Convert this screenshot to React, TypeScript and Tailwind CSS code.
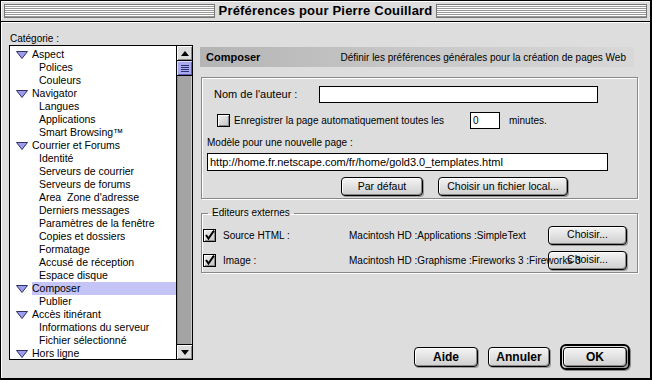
import React from "react";

type Row = { label: string; parent?: boolean; selected?: boolean };

const rows: Row[] = [
  { label: "Aspect", parent: true },
  { label: "Polices" },
  { label: "Couleurs" },
  { label: "Navigator", parent: true },
  { label: "Langues" },
  { label: "Applications" },
  { label: "Smart Browsing™" },
  { label: "Courrier et Forums", parent: true },
  { label: "Identité" },
  { label: "Serveurs de courrier" },
  { label: "Serveurs de forums" },
  { label: "Area  Zone d'adresse" },
  { label: "Derniers messages" },
  { label: "Paramètres de la fenêtre" },
  { label: "Copies et dossiers" },
  { label: "Formatage" },
  { label: "Accusé de réception" },
  { label: "Espace disque" },
  { label: "Composer", parent: true, selected: true },
  { label: "Publier" },
  { label: "Accès itinérant", parent: true },
  { label: "Informations du serveur" },
  { label: "Fichier sélectionné" },
  { label: "Hors ligne", parent: true },
];

function Triangle() {
  return (
    <svg width="12" height="8" viewBox="0 0 12 8" className="shrink-0">
      <path d="M0.5 0.5 H11.5 L6 7.5 Z" fill="#9c9cf0" stroke="#303060" strokeWidth="1" />
    </svg>
  );
}

function MacButton({ label, className }: { label: string; className: string }) {
  return (
    <div
      className={`flex items-center justify-center rounded-[4px] border border-black bg-gradient-to-b from-[#f4f4f4] to-[#cfcfcf] text-black shadow-[inset_-1px_-1px_0_#888888,inset_1px_1px_0_#ffffff,1px_1px_0_#999999] ${className}`}
    >
      {label}
    </div>
  );
}

function CheckBox({ checked }: { checked?: boolean }) {
  return (
    <div className="relative h-[13px] w-[13px] shrink-0 border border-black bg-gradient-to-br from-[#f0f0f0] to-[#c4c4c4] shadow-[inset_1px_1px_0_#ffffff,inset_-1px_-1px_0_#888888]">
      {checked && (
        <svg width="13" height="13" viewBox="0 0 13 13" className="absolute left-[-1px] top-[-1px]">
          <path d="M3 6 L5.5 9.5 L11 1.5" fill="none" stroke="#000000" strokeWidth="2" />
        </svg>
      )}
    </div>
  );
}

function Stripes() {
  return (
    <div className="h-[14px] flex-1 border border-[#777777] bg-[repeating-linear-gradient(to_bottom,#ffffff_0px,#ffffff_1px,#999999_1px,#999999_2px)]" />
  );
}

export default function App() {
  return (
    <div className="flex h-[380px] w-[652px] flex-col overflow-hidden border-l border-t border-r-2 border-b-2 border-black bg-[#dddddd] font-['Liberation_Sans',Arial,sans-serif] text-[10px] text-black">
      {/* title bar */}
      <div className="flex h-[21px] shrink-0 items-center gap-[4px] border-b border-black px-[3px] shadow-[inset_1px_1px_0_#ffffff]">
        <Stripes />
        <div className="text-[13px] font-bold tracking-[0.2px]">Préférences pour Pierre Couillard</div>
        <Stripes />
      </div>

      <div className="flex flex-1 shadow-[inset_1px_1px_0_#ffffff]">
        {/* left column */}
        <div className="w-[192px] shrink-0 pl-[8px] pt-[11px]">
          <div className="h-[12px] pl-[1px] leading-[12px]">Catégorie :</div>
          <div className="flex h-[315px] w-[184px] border border-black">
            <div className="flex-1 overflow-hidden bg-white pt-[2px] text-[10.5px]">
              {rows.map((r) => (
                <div key={r.label} className="flex h-[13px] items-center leading-[13px]">
                  {r.parent ? (
                    <>
                      <div className="flex w-[22px] justify-end pr-[4px]">
                        <Triangle />
                      </div>
                      <div className={`h-[13px] flex-1 whitespace-pre ${r.selected ? "bg-[#c4c4f6]" : ""}`}>{r.label}</div>
                    </>
                  ) : (
                    <div className="whitespace-pre pl-[29px]">{r.label}</div>
                  )}
                </div>
              ))}
            </div>
            <div className="flex w-[16px] flex-col border-l border-black bg-[#a4a4a4]">
              <div className="flex h-[15px] items-center justify-center border-b border-black bg-[#dddddd] shadow-[inset_1px_1px_0_#ffffff,inset_-1px_-1px_0_#888888]">
                <svg width="8" height="5" viewBox="0 0 8 5"><path d="M4 0 L8 5 H0 Z" fill="#000" /></svg>
              </div>
              <div className="flex h-[15px] flex-col items-center justify-center gap-[1px] border-b border-black bg-[#a9a9f2] shadow-[inset_1px_1px_0_#d8d8ff,inset_-1px_-1px_0_#5f5fb0]">
                <div className="h-[1px] w-[8px] bg-[#303070]" />
                <div className="h-[1px] w-[8px] bg-[#303070]" />
                <div className="h-[1px] w-[8px] bg-[#303070]" />
                <div className="h-[1px] w-[8px] bg-[#303070]" />
              </div>
              <div className="flex-1 shadow-[inset_1px_0_0_#888888,inset_-1px_0_0_#c8c8c8]" />
              <div className="flex h-[15px] items-center justify-center border-t border-black bg-[#dddddd] shadow-[inset_1px_1px_0_#ffffff,inset_-1px_-1px_0_#888888]">
                <svg width="8" height="5" viewBox="0 0 8 5"><path d="M0 0 H8 L4 5 Z" fill="#000" /></svg>
              </div>
            </div>
          </div>
        </div>

        {/* right column */}
        <div className="flex w-[441px] flex-col pl-[7px] pt-[25px]">
          <div className="flex h-[20px] items-center justify-between bg-gradient-to-r from-[#b4b4b4] via-[#c8c8c8] to-[#d8d8d8] pl-[6px] pr-[8px]">
            <span className="text-[11px] font-bold">Composer</span>
            <span>Définir les préférences générales pour la création de pages Web</span>
          </div>

          <div className="ml-[1px] mt-[10px] h-[122px] w-[437px] border border-[#888888] shadow-[inset_1px_1px_0_#ffffff,1px_1px_0_#ffffff] pl-[5px] pt-[8px]">
            <div className="flex h-[17px] items-center">
              <span className="w-[112px] pl-[7px] text-[11px]">Nom de l'auteur :</span>
              <div className="h-[17px] w-[279px] border border-black bg-white" />
            </div>
            <div className="mt-[9px] flex h-[17px] items-center">
              <div className="ml-[10px]"><CheckBox /></div>
              <span className="ml-[4px] w-[236px]">Enregistrer la page automatiquement toutes les</span>
              <div className="flex h-[17px] w-[30px] items-center border border-black bg-white pl-[2px]">0</div>
              <span className="ml-[9px]">minutes.</span>
            </div>
            <div className="mt-[7px] h-[13px] leading-[13px]">Modèle pour une nouvelle page :</div>
            <div className="mt-[4px] flex h-[18px] w-[401px] items-center border border-black bg-white pl-[2px] text-[11px]">
              http://home.fr.netscape.com/fr/home/gold3.0_templates.html
            </div>
            <div className="mt-[6px] flex gap-[15px] pl-[134px] text-[10.5px]">
              <MacButton label="Par défaut" className="h-[19px] w-[82px]" />
              <MacButton label="Choisir un fichier local..." className="h-[19px] w-[130px]" />
            </div>
          </div>

          <fieldset className="ml-[1px] mt-[8px] h-[66px] w-[437px] border border-[#888888] pl-[1px] shadow-[inset_1px_1px_0_#ffffff,1px_1px_0_#ffffff]">
            <legend className="ml-[5px] px-[4px] leading-[12px]">Editeurs externes</legend>
            <div className="mt-[6px] flex h-[20px] items-center">
              <CheckBox checked />
              <span className="ml-[7px] w-[126px]">Source HTML :</span>
              <span className="w-[199px] whitespace-nowrap">Macintosh HD :Applications :SimpleText</span>
              <MacButton label="Choisir..." className="h-[19px] w-[79px] text-[10.5px]" />
            </div>
            <div className="mt-[5px] flex h-[20px] items-center">
              <CheckBox checked />
              <span className="ml-[7px] w-[126px]">Image :</span>
              <MacButton label="Choisir..." className="order-last h-[19px] w-[79px] text-[10.5px]" />
              <span className="relative z-10 w-[199px] whitespace-nowrap">Macintosh HD :Graphisme :Fireworks 3 :Fireworks 3</span>
            </div>
          </fieldset>

          <div className="mt-auto mb-[8px] flex items-center justify-end gap-[10px] pr-[4px]">
            <MacButton label="Aide" className="h-[20px] w-[64px] font-bold text-[12px]" />
            <MacButton label="Annuler" className="h-[20px] w-[62px] font-bold text-[12px]" />
            <div className="rounded-[6px] border-2 border-black p-[1px] shadow-[1px_1px_0_#888888]">
              <MacButton label="OK" className="h-[20px] w-[64px] font-bold text-[12px]" />
            </div>
          </div>
        </div>
      </div>
    </div>
  );
}
